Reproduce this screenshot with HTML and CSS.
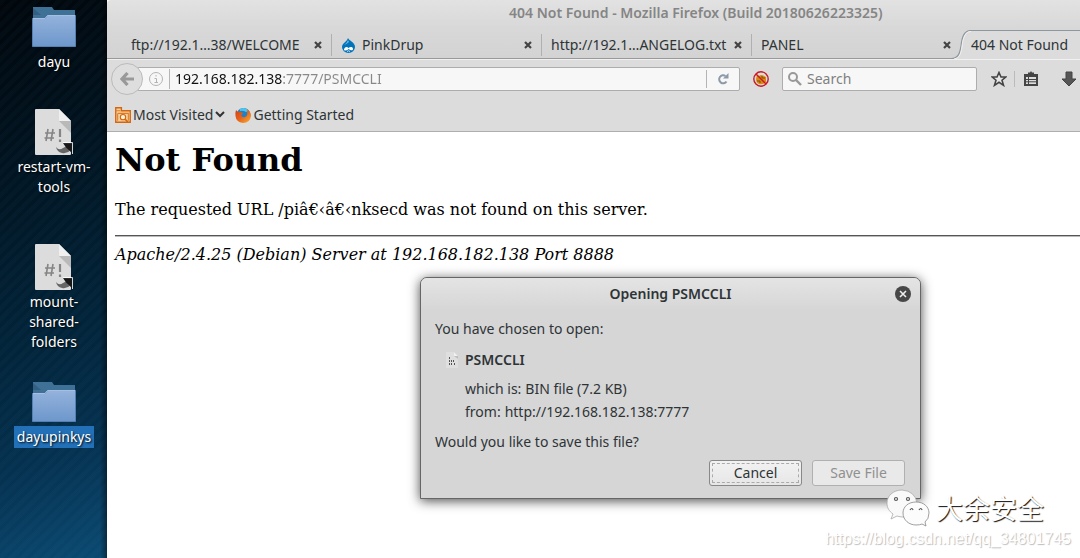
FILE: index.html
```
<!DOCTYPE html>
<html lang="en">
<head>
<meta charset="utf-8">
<title>404 Not Found</title>
<link rel="stylesheet" href="styles.css">
</head>
<body>
<svg width="0" height="0" class="defs" aria-hidden="true">
  <defs>
    <linearGradient id="folder" x1="0" y1="0" x2="0" y2="1"><stop offset="0" stop-color="#94b2dc"/><stop offset="1" stop-color="#6d97cb"/></linearGradient>
    <linearGradient id="flame" x1="0" y1="0" x2="1" y2="1"><stop offset="0" stop-color="#c9401b"/><stop offset=".5" stop-color="#e8641b"/><stop offset="1" stop-color="#f9b233"/></linearGradient>
  </defs>
  <symbol id="i-folder" viewBox="0 0 44 40">
    <path d="M1 0H20L22 3H43V30H1Z" fill="#3f7096"/>
    <path d="M1 1L9 8H1Z" fill="#335f83"/>
    <path d="M.5 11.5H13L15.500 8.500H43.500V39.500H.5Z" fill="url(#folder)" stroke="#5580b4"/>
    <path d="M1 11.500H13L15.500 8.500H43" fill="none" stroke="#a5bfe2"/>
  </symbol>
  <symbol id="i-script" viewBox="0 0 38 46">
    <path d="M1 0H24L36 12V45Q36 46 35 46H1Q0 46 0 45V1Q0 0 1 0Z" fill="#dcdcdc"/>
    <path d="M24 12H36V24Z" fill="#b9b9b9"/>
    <path d="M24 0L36 12H24Z" fill="#efefef"/>
    <path d="M13 20L11 32M18 20L16 32M10 24H20M9.500 29H19" fill="none" stroke="#858585" stroke-width="1.600"/>
    <path d="M25 20V28M25 30.500V33" stroke="#858585" stroke-width="2.200"/>
    <path d="M21 38Q24 42 28 39Q31 38 32 36L36 41Q32 45 27 44Q22 43 21 38Z" fill="#666"/>
    <path d="M28 34H37.500V45L34.500 41.500L31.500 39L30 37Z" fill="#181818"/>
    <path d="M28 33.600H37.600V45" fill="none" stroke="#fff" stroke-width=".9"/>
  </symbol>
  <symbol id="i-close" viewBox="0 0 8 8"><path d="M1 1L7 7M7 1L1 7" stroke="#444" stroke-width="2.200"/></symbol>
</svg>
<div class="screen">
  <aside class="desktop">
    <a class="shortcut" href="#dayu"><svg class="folder"><use href="#i-folder"/></svg><span class="name">dayu</span></a>
    <a class="shortcut" href="#restart"><svg class="doc"><use href="#i-script"/></svg><span class="name">restart-vm-<br>tools</span></a>
    <a class="shortcut" href="#mount"><svg class="doc"><use href="#i-script"/></svg><span class="name">mount-<br>shared-<br>folders</span></a>
    <a class="shortcut" href="#pinkys"><svg class="folder"><use href="#i-folder"/></svg><span class="name selected">dayupinkys</span></a>
  </aside>

  <main class="browser">
    <header class="titlebar">404 Not Found - Mozilla Firefox (Build 20180626223325)</header>
    <nav class="tabs" aria-label="Tabs">
      <div class="tab"><button class="label">ftp://192.1…38/WELCOME</button><button class="close" aria-label="Close tab"><svg><use href="#i-close"/></svg></button></div>
      <div class="tab"><svg class="drupal" viewBox="0 0 15 15"><path d="M7 0C8 3 14 4 14 9A6.500 6 0 0 1 1 9C1 5 6 4 7 0Z" fill="#0073ba"/><path d="M7 2Q6 5 3 7Q6 6 8 4Z" fill="#66b5e3"/><path d="M3 11.500C4 8.500 6 8.500 7.500 10C9 8.500 12 8.500 12 11C12 13 9.500 12.500 7.500 11C6 12.500 3 13.500 3 11.500Z" fill="#fff"/><path d="M6 13.500Q7.500 12 9 13.500" fill="none" stroke="#fff" stroke-width=".8"/></svg><button class="label">PinkDrup</button><button class="close" aria-label="Close tab"><svg><use href="#i-close"/></svg></button></div>
      <div class="tab"><button class="label">http://192.1…ANGELOG.txt</button><button class="close" aria-label="Close tab"><svg><use href="#i-close"/></svg></button></div>
      <div class="tab"><button class="label">PANEL</button><button class="close" aria-label="Close tab"><svg><use href="#i-close"/></svg></button></div>
      <div class="tab-active">
        <svg class="curve" viewBox="0 0 20 29"><path d="M0 28.500C8 28.500 9 22 10 16C11 7 13 .5 20 .5V29H0Z" fill="#dcdcdc"/><path d="M0 28.500C8 28.500 9 22 10 16C11 7 13 .5 20 .5" fill="none" stroke="#8f979d" stroke-width="1.200"/><path d="M3 29C9 28 10 23 11 17C12 8 14 1.500 20 1.500" fill="none" stroke="#f1f1f1"/></svg>
        <button class="label">404 Not Found</button>
      </div>
    </nav>
    <div class="toolbar">
      <button class="back" aria-label="Back"><svg viewBox="0 0 14 14"><path d="M7.500 1L2 7L7.500 13M2 7H14" fill="none" stroke="#999" stroke-width="3.200"/></svg></button>
      <div class="urlbar">
        <svg class="info" viewBox="0 0 14 14"><circle cx="7" cy="7" r="6.500" fill="none" stroke="#b3b3b3"/><path d="M7 3V4.500M5.500 6.500H7.500V10.500M5.500 10.500H9" fill="none" stroke="#b3b3b3"/></svg>
        <input class="url" type="text" aria-label="Address" value="192.168.182.138:7777/PSMCCLI">
        <button class="reload" aria-label="Reload"><svg viewBox="0 0 12 12"><path d="M9.500 8.500A4 4 0 1 1 8.500 3" fill="none" stroke="#8c9aa8" stroke-width="2"/><path d="M11.500 0V5.500H6Z" fill="#8c9aa8"/></svg></button>
      </div>
      <button class="noscript" aria-label="Blocked cookies"><svg viewBox="0 0 16 16"><path d="M3 8L4 4L6 5Q8 3 11 5L13 6L13 11Q10 14 6 13Q3 12 3 8Z" fill="#d98a12"/><path d="M4 10H7V12M9 5V7H12" fill="none" stroke="#7b4b12"/><circle cx="8" cy="8" r="7.200" fill="none" stroke="#cc1822" stroke-width="1.400"/><path d="M3 3L13 13" stroke="#cc1822" stroke-width="1.400"/></svg></button>
      <div class="search">
        <svg viewBox="0 0 14 14"><circle cx="5" cy="5" r="4" fill="none" stroke="#999" stroke-width="2"/><path d="M8 8L13 13" stroke="#999" stroke-width="2.400"/></svg>
        <input type="text" placeholder="Search" aria-label="Search">
      </div>
      <button class="tool" aria-label="Bookmark this page"><svg viewBox="0 0 16 16"><path d="M8 1.500L10 6H14.800L11 9.200L12.500 14.300L8 11.300L3.500 14.300L5 9.200L1.200 6H6Z" fill="#e6e6e6" stroke="#444" stroke-width="1.600"/></svg></button>
      <button class="tool list" aria-label="Show bookmarks"><svg viewBox="0 0 16 16"><path d="M1 3H5V1.500H7L8 0L9 1.500H11V3H15V15H1Z" fill="#454545"/><path d="M3 6H13V13H3Z" fill="#ddd"/><path d="M3 8.500H13M3 10.800H13M5.500 6V13" stroke="#454545" stroke-width="1"/></svg></button>
      <button class="tool" aria-label="Downloads"><svg viewBox="0 0 16 16"><path d="M5 1H11V8H15L8 15L1 8H5Z" fill="#555" stroke="#444"/></svg></button>
    </div>
    <div class="bookmarks">
      <button class="bookmark"><svg class="mark" viewBox="0 0 15 15"><path d="M.7 14.300V.7H6V3.500H14.300V14.300Z" fill="#f4d1a2" stroke="#d5650b" stroke-width="1.300"/><path d="M.5 3.500H5M2.500 6H13M2.500 6V13M12.500 6V13" fill="none" stroke="#df7c25"/><circle cx="7.500" cy="9.500" r="2.500" fill="#fff0d8" stroke="#d5650b"/><path d="M9.500 11.500L12 14" stroke="#d5650b" stroke-width="1.500"/></svg>Most Visited<svg class="chevron" viewBox="0 0 10 7"><path d="M1 1L5 5L9 1" fill="none" stroke="#333" stroke-width="2"/></svg></button>
      <button class="bookmark"><svg class="mark" viewBox="0 0 16 16"><circle cx="8.500" cy="8" r="7" fill="#1d83c6"/><path d="M5 2Q10-1 14 4L11 5Q8 3 5 4Z" fill="#4fc3ef"/><path d="M1 3L3 5Q5 4 6 5L8 6Q7 8 6 8Q7 11 10 10Q13 9 12 5Q13 4 12 2Q16 5 16 9Q15 16 8 16Q1 15 .5 9Q0 6 1 3Z" fill="url(#flame)"/></svg>Getting Started</button>
    </div>
    <article class="page">
      <h1>Not Found</h1>
      <p>The requested URL /piâ€‹â€‹nksecd was not found on this server.</p>
      <hr>
      <address>Apache/2.4.25 (Debian) Server at 192.168.182.138 Port 8888</address>
    </article>
    <section class="dialog" role="dialog" aria-labelledby="dialog-title">
      <header class="dialog-head"><h2 id="dialog-title">Opening PSMCCLI</h2><button class="dialog-close" aria-label="Close"><svg viewBox="0 0 16 16"><circle cx="8" cy="8" r="8" fill="#474747"/><path d="M5 5L11 11M11 5L5 11" stroke="#eee" stroke-width="1.600"/></svg></button></header>
      <div class="dialog-body">
        <p>You have chosen to open:</p>
        <div class="file"><svg viewBox="0 0 12 16"><path d="M0 0H8L12 4V16H0Z" fill="#dfdfdf"/><path d="M8 0L12 4V7L8 4Z" fill="#bebebe"/><path d="M8 0L12 4H8Z" fill="#f1f1f1"/><path d="M3.500 5V7M3.500 8V10M3.500 11V13M5.500 8V10M5.500 11V13M7.500 8V10M8.500 11V13" stroke="#555"/></svg><strong>PSMCCLI</strong></div>
        <dl class="facts">
          <div><dt>which is:</dt><dd>BIN file (7.2 KB)</dd></div>
          <div><dt>from:</dt><dd>http://192.168.182.138:7777</dd></div>
        </dl>
        <p>Would you like to save this file?</p>
        <div class="actions"><button class="btn focused">Cancel</button><button class="btn" disabled>Save File</button></div>
      </div>
    </section>
  </main>
  <div class="watermark">
    <div class="account"><svg viewBox="0 0 44 38"><path d="M16 1C7 1 1 7 1 14C1 19 3 22 7 25L5 30L11 27Q14 28 17 28H30L31 14Q29 2 16 1Z" fill="#f9f9f9" stroke="#aaa" stroke-width=".8"/><path d="M30 13C22 13 17 18 17 24C17 31 23 36 30 36Q34 36 36 35L40 37L39 33Q43 30 43 24C43 18 38 13 30 13Z" fill="#fcfcfc" stroke="#888" stroke-width=".8"/><g fill="none" stroke="#555" stroke-width="1.200"><circle cx="10" cy="10" r="1.500"/><circle cx="22" cy="10" r="1.500"/><path d="M24 21Q26 18 27 21M33 21Q35 18 36 21"/></g></svg><span>大余安全</span></div>
    <div class="link">https://blog.csdn.net/qq_34801745</div>
  </div>
</div>
</body>
</html>
```
FILE: styles.css
```
* { box-sizing: border-box; }
body { margin: 0; font: 14px/20px "Noto Sans", "Open Sans", sans-serif; color: #2e3436; }
button { margin: 0; padding: 0; border: 0; background: none; font: inherit; color: inherit; }
input { min-width: 0; border: 0; outline: 0; padding: 0; font: inherit; }
svg { display: block; flex: none; }
.defs { position: absolute; }
.screen { position: relative; display: grid; grid-template-columns: 107px minmax(0, 1fr); min-height: 100vh; overflow: hidden; }

.desktop {
  display: flex; flex-direction: column; align-items: center; padding: 7px 0 0 1px;
  background:
    linear-gradient(to right, transparent 100px, rgba(0, 0, 0, .4)),
    repeating-linear-gradient(135deg, rgba(90, 160, 200, .03) 0 4px, transparent 5px 8px),
    linear-gradient(160deg, #01060b 0%, #011421 30%, #02243a 60%, #053150 80%, #0b4a72 100%);
}
.shortcut { display: flex; flex-direction: column; align-items: center; color: #fff; text-align: center; text-decoration: none; text-shadow: 1px 1px 2px #000; }
.folder { width: 44px; height: 40px; margin-bottom: 4px; }
.doc { width: 38px; height: 46px; margin: 36px 0 1px; }
.doc + .name { margin-bottom: 10px; }
.shortcut:last-child { padding-top: 19px; }
.name { padding: 1px 5px; }
.selected { padding: 1px 3px; background: #2170b8; }

.browser { position: relative; display: flex; flex-direction: column; min-width: 0; background: #fff; border-top-left-radius: 4px; overflow: hidden; }
.titlebar { height: 28px; padding: 3px 0 0 402px; background: linear-gradient(#e2e2e2, #d8d8d8); color: #858585; font-weight: 600; white-space: nowrap; }
.tabs { display: flex; height: 31px; padding-left: 15px; background: linear-gradient(#d8d8d8, #d3d3d3); box-shadow: inset 0 -1px #999; }
.tab { display: flex; align-items: center; width: 210px; margin: 6px 0 3px; padding: 0 9px; border-right: 1px solid #b0b0b0; gap: 6px; flex: none; }
.tab:nth-child(4) { border-right: 0; width: 208px; }
.tab .label { flex: 1; min-width: 0; text-align: left; white-space: nowrap; }
.close svg { width: 8px; height: 8px; }
.drupal { width: 15px; height: 15px; }
.tab-active { display: flex; flex: 1; min-width: 0; margin-left: -9px; padding-top: 2px; }
.curve { width: 20px; height: 29px; }
.tab-active .label { flex: 1; text-align: left; white-space: nowrap; overflow: hidden; background: #dcdcdc; border-top: 1px solid #8f979d; }

.toolbar { display: flex; align-items: center; height: 39px; padding-left: 4px; background: #dcdcdc; border-top: 1px solid #f0f0f0; }
.back { z-index: 1; display: grid; place-items: center; flex: none; width: 32px; height: 32px; border: 1px solid #bbb; border-radius: 50%; background: #dedede; }
.back svg { width: 14px; height: 14px; }
.urlbar, .search { display: flex; align-items: center; height: 24px; border: 1px solid #adadad; border-radius: 2px; background: #f7f7f7; }
.urlbar { flex: 1; min-width: 0; margin-left: -6px; padding-left: 11px; }
.info { width: 14px; height: 14px; margin-right: 6px; }
.url { flex: 1; height: 20px; padding-left: 5px; border-left: 1px solid #b5b5b5; color: transparent; background: linear-gradient(to right, #111 112px, #888 112px); background-clip: text; -webkit-background-clip: text; }
.reload { display: grid; place-items: center; width: 33px; height: 18px; border-left: 1px solid #b5b5b5; }
.reload svg { width: 12px; height: 12px; }
.noscript { margin: 0 13px; }
.noscript svg, .tool svg { width: 16px; height: 16px; }
.search { width: 195px; padding-left: 5px; gap: 5px; }
.search svg { width: 14px; height: 14px; }
.search input { flex: 1; background: transparent; }
.search input::placeholder { color: #808080; opacity: 1; }
.tool { flex: none; margin-left: 14px; }
.list { margin-left: 7px; padding-left: 8px; border-left: 1px solid #bbb; }
.list + .tool { margin: 0 3px 0 22px; }

.bookmarks { display: flex; height: 34px; padding: 0 8px; gap: 10px; background: #dcdcdc; border-bottom: 1px solid #aeaeae; }
.bookmark { display: flex; align-items: center; gap: 2px; }
.mark { width: 16px; height: 16px; }
.chevron { width: 10px; height: 7px; }

.page { flex: 1; padding: 8px 0 0 8px; color: #000; font: 16px/20px "DejaVu Serif", serif; }
.page h1 { margin: 0; font-size: 32px; line-height: 40px; }
.page p { margin: 20px 0 0; }
.page hr { margin: 15px 0 8px; border: 0; border-top: 1px solid #555; border-bottom: 1px solid #bbb; }

.dialog { position: absolute; left: 313px; top: 277px; width: 501px; border: 1px solid #666; border-radius: 7px 7px 0 0; background: #d6d6d6; box-shadow: 0 2px 12px rgba(0, 0, 0, .7); }
.dialog-head { display: grid; grid-template-columns: 1fr auto 1fr; align-items: center; height: 32px; border-radius: 6px 6px 0 0; background: linear-gradient(#e4e4e4, #d6d6d6); }
.dialog h2 { grid-column: 2; margin: 0; font-size: 14px; line-height: 20px; font-weight: 600; }
.dialog-close { justify-self: end; margin-right: 9px; }
.dialog-close svg { width: 16px; height: 16px; }
.dialog-body { padding: 9px 15px 12px 14px; }
.dialog-body p { margin: 0; }
.file { display: flex; gap: 7px; align-items: center; padding: 11px 0 7px 11px; }
.file svg { width: 12px; height: 16px; }
.file strong { font-weight: 600; }
.facts { margin: 0 0 9px 30px; line-height: 23px; }
.facts div { display: flex; gap: 4px; }
.facts dd { margin: 0; }
.actions { display: flex; justify-content: flex-end; gap: 10px; margin-top: 8px; }
.btn { width: 93px; height: 26px; border: 1px solid #888; border-radius: 3px; background: linear-gradient(#f2f2f2, #e6e6e6); }
.btn:disabled { border-color: #b0b0b0; color: #909090; background: #e9e9e9; }
.focused { outline: 1px dashed #aaa; outline-offset: -4px; }

.watermark { position: absolute; right: 9px; bottom: 9px; display: flex; flex-direction: column; align-items: flex-end; }
.account { display: flex; align-items: center; gap: 6px; margin-right: 27px; color: #fff; font: 27px/42px "Noto Sans CJK SC", sans-serif; text-shadow: 1px 1px 1px #111; }
.account svg { width: 44px; height: 38px; }
.link { color: #fff; font: 16px/20px "Liberation Sans", Arial, sans-serif; text-shadow: 1px 1px 1px #bbb; }
```
